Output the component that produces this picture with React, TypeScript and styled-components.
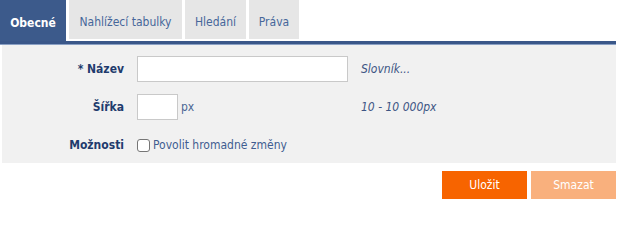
import React from "react";
import styled, { createGlobalStyle } from "styled-components";

const Global = createGlobalStyle`
  html, body { margin: 0; padding: 0; background: #ffffff; }
  body { font-family: "DejaVu Sans Condensed", "DejaVu Sans", sans-serif; font-size: 12px; }
`;

const Page = styled.div`
  width: 617px;
  display: flex;
  flex-direction: column;
`;

const TabBar = styled.div`
  display: flex;
  gap: 3px;
  height: 41px;
  align-items: stretch;
`;

const Tab = styled.div<{ $active?: boolean; $w: number }>`
  width: ${(p) => p.$w}px;
  height: ${(p) => (p.$active ? 41 : 39)}px;
  display: flex;
  align-items: center;
  justify-content: center;
  background: ${(p) => (p.$active ? "#3c5a8b" : "#e6e6e6")};
  color: ${(p) => (p.$active ? "#ffffff" : "#46669a")};
  font-weight: ${(p) => (p.$active ? "bold" : "normal")};
  font-size: 12px;
  padding-top: ${(p) => (p.$active ? 4 : 4)}px;
  box-sizing: border-box;
`;

const Bar = styled.div`
  height: 4px;
  background: #3a5789;
  border-bottom: 1px solid #8aa0c4;
  box-sizing: border-box;
  margin-right: 1px;
`;

const Panel = styled.div`
  background: #f1f1f1;
  margin: 0 1px 0 2px;
  padding: 11px 0 5px 0;
  display: grid;
  grid-template-columns: 122px 211px auto;
  column-gap: 13px;
  row-gap: 12px;
  align-items: center;
`;

const Label = styled.div`
  text-align: right;
  font-weight: bold;
  color: #1f3b6d;
  font-size: 12px;
`;

const Field = styled.div`
  display: flex;
  align-items: center;
  gap: 3px;
  height: 26px;
`;

const TextInput = styled.div<{ $w: number }>`
  width: ${(p) => p.$w}px;
  height: 26px;
  box-sizing: border-box;
  background: #ffffff;
  border: 1px solid #c9c9c9;
`;

const Unit = styled.span`
  color: #4a6694;
  font-size: 12px;
`;

const Hint = styled.div`
  font-style: italic;
  color: #3d5584;
  font-size: 12px;
`;

const Check = styled.span`
  width: 13px;
  height: 13px;
  box-sizing: border-box;
  border: 1px solid #767676;
  border-radius: 3px;
  background: #ffffff;
  margin-top: 1px;
`;

const CheckText = styled.span`
  color: #3f5d90;
  font-size: 12px;
`;

const Actions = styled.div`
  display: flex;
  justify-content: flex-end;
  gap: 4px;
  padding-top: 8px;
  margin-right: 1px;
`;

const Button = styled.div<{ $disabled?: boolean }>`
  width: 85px;
  height: 28px;
  display: flex;
  align-items: center;
  justify-content: center;
  color: #ffffff;
  font-size: 12px;
  background: ${(p) => (p.$disabled ? "#f9b07d" : "#f76400")};
`;

export default function App() {
  return (
    <>
      <Global />
      <Page>
        <TabBar>
          <Tab $active $w={66}>Obecné</Tab>
          <Tab $w={113}>Nahlížecí tabulky</Tab>
          <Tab $w={61}>Hledání</Tab>
          <Tab $w={50}>Práva</Tab>
        </TabBar>
        <Bar />
        <Panel>
          <Label>* Název</Label>
          <Field>
            <TextInput $w={211} />
          </Field>
          <Hint>Slovník...</Hint>

          <Label>Šířka</Label>
          <Field>
            <TextInput $w={41} />
            <Unit>px</Unit>
          </Field>
          <Hint>10 - 10 000px</Hint>

          <Label>Možnosti</Label>
          <Field>
            <Check />
            <CheckText>Povolit hromadné změny</CheckText>
          </Field>
          <div />
        </Panel>
        <Actions>
          <Button>Uložit</Button>
          <Button $disabled>Smazat</Button>
        </Actions>
      </Page>
    </>
  );
}
